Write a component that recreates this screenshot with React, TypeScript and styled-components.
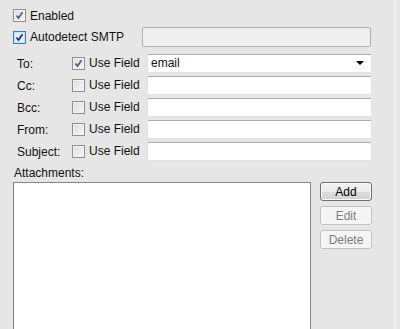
import React from 'react'
import styled, { createGlobalStyle } from 'styled-components'

const GlobalStyle = createGlobalStyle`
    html, body {
        margin: 0;
        padding: 0;
        background: #e6e6e6;
        overflow: hidden;
    }
    body {
        font-family: "Liberation Sans", Arial, sans-serif;
        font-size: 12px;
        color: #111;
    }
`

const Window = styled.div`
    display: flex;
    width: 400px;
    height: 329px;
    overflow: hidden;
`

const Panel = styled.div`
    width: 396px;
    box-sizing: border-box;
    border-right: 2px solid #f1f1f1;
    padding: 9px 0 0 13px;
    display: flex;
    flex-direction: column;
`

const Row = styled.div`
    display: flex;
    align-items: center;
    height: ${(p: { h?: number }) => p.h ?? 20}px;
`

const CheckLabel = styled.label`
    display: flex;
    align-items: center;
    gap: 4px;
    white-space: nowrap;
`

const Box = styled.span<{ $hover?: boolean }>`
    width: 13px;
    height: 13px;
    box-sizing: border-box;
    border: 1px solid ${(p) => (p.$hover ? '#3c7fb1' : '#8e8f8f')};
    background: ${(p) =>
        p.$hover
            ? 'linear-gradient(135deg, #d8ecfa 0%, #eaf5fd 100%)'
            : 'linear-gradient(135deg, #dcdcdc 0%, #f7f7f7 100%)'};
    box-shadow: inset 0 0 0 1px ${(p) => (p.$hover ? '#c5e1f5' : '#f4f4f4')};
    display: flex;
    align-items: center;
    justify-content: center;
    flex-shrink: 0;
`

const Check = ({ checked, hover }: { checked?: boolean; hover?: boolean }) => (
    <Box $hover={hover}>
        {checked && (
            <svg width="9" height="9" viewBox="0 0 9 9">
                <path
                    d="M1.5 4.5 L3.5 7 L7.5 1.2"
                    fill="none"
                    stroke={hover ? '#1c2e6e' : '#4a5c93'}
                    strokeWidth="1.7"
                />
            </svg>
        )}
    </Box>
)

const DisabledInput = styled.div`
    margin-left: auto;
    margin-right: 23px;
    width: 229px;
    height: 20px;
    box-sizing: border-box;
    border: 1px solid #b1b1b1;
    border-radius: 2px;
    background: #efefef;
`

const FieldGrid = styled.div`
    display: grid;
    grid-template-columns: 55px 75px 225px;
    grid-auto-rows: 20px;
    row-gap: 2px;
    margin-top: 6px;
    margin-left: 4px;
    align-items: center;
`

const FieldLabel = styled.span`
    padding-top: 1px;
`

const TextBox = styled.div`
    height: 19px;
    box-sizing: border-box;
    border: 1px solid #e2e3ea;
    border-top-color: #abadb3;
    border-radius: 2px;
    background: #fff;
    display: flex;
    align-items: center;
    padding-left: 3px;
    padding-right: 7px;
`

const ComboText = styled.span`
    flex: 1;
`

const Arrow = styled.span`
    width: 0;
    height: 0;
    border-left: 4px solid transparent;
    border-right: 4px solid transparent;
    border-top: 4px solid #000;
`

const AttachTitle = styled.div`
    margin-top: 5px;
    margin-left: 1px;
    height: 14px;
`

const AttachArea = styled.div`
    display: flex;
    gap: 9px;
    margin-top: 2px;
`

const ListBox = styled.div`
    width: 298px;
    height: 200px;
    box-sizing: border-box;
    border: 1px solid #828790;
    border-left-color: #7a7d84;
    background: #fff;
`

const Buttons = styled.div`
    display: flex;
    flex-direction: column;
    gap: 5px;
`

const Button = styled.button<{ $disabled?: boolean }>`
    width: 52px;
    height: 19px;
    padding: 0;
    box-sizing: border-box;
    font-family: "Liberation Sans", Arial, sans-serif;
    font-size: 12px;
    border-radius: 3px;
    border: 1px solid ${(p) => (p.$disabled ? '#c2c2c2' : '#707070')};
    color: ${(p) => (p.$disabled ? '#7c7c7c' : '#000')};
    background: ${(p) =>
        p.$disabled ? '#f4f4f4' : 'linear-gradient(#f2f2f2 0%, #ebebeb 50%, #dcdcdc 51%, #d2d2d2 100%)'};
    box-shadow: inset 0 0 0 1px ${(p) => (p.$disabled ? '#f7f7f7' : '#fbfbfb')};
`

const fields = [
    { label: 'To:', checked: true, value: 'email', combo: true },
    { label: 'Cc:' },
    { label: 'Bcc:' },
    { label: 'From:' },
    { label: 'Subject:' },
]

const App = () => {
    return (
        <Window>
            <GlobalStyle />
            <Panel>
                <Row h={13}>
                    <CheckLabel>
                        <Check checked />
                        Enabled
                    </CheckLabel>
                </Row>
                <Row h={20} style={{ marginTop: 5 }}>
                    <CheckLabel>
                        <Check checked hover />
                        Autodetect SMTP
                    </CheckLabel>
                    <DisabledInput />
                </Row>
                <FieldGrid>
                    {fields.map((f) => (
                        <React.Fragment key={f.label}>
                            <FieldLabel>{f.label}</FieldLabel>
                            <CheckLabel>
                                <Check checked={f.checked} />
                                Use Field
                            </CheckLabel>
                            <TextBox>
                                {f.combo && (
                                    <>
                                        <ComboText>{f.value}</ComboText>
                                        <Arrow />
                                    </>
                                )}
                            </TextBox>
                        </React.Fragment>
                    ))}
                </FieldGrid>
                <AttachTitle>Attachments:</AttachTitle>
                <AttachArea>
                    <ListBox />
                    <Buttons>
                        <Button>Add</Button>
                        <Button $disabled>Edit</Button>
                        <Button $disabled>Delete</Button>
                    </Buttons>
                </AttachArea>
            </Panel>
        </Window>
    )
}

export default App
